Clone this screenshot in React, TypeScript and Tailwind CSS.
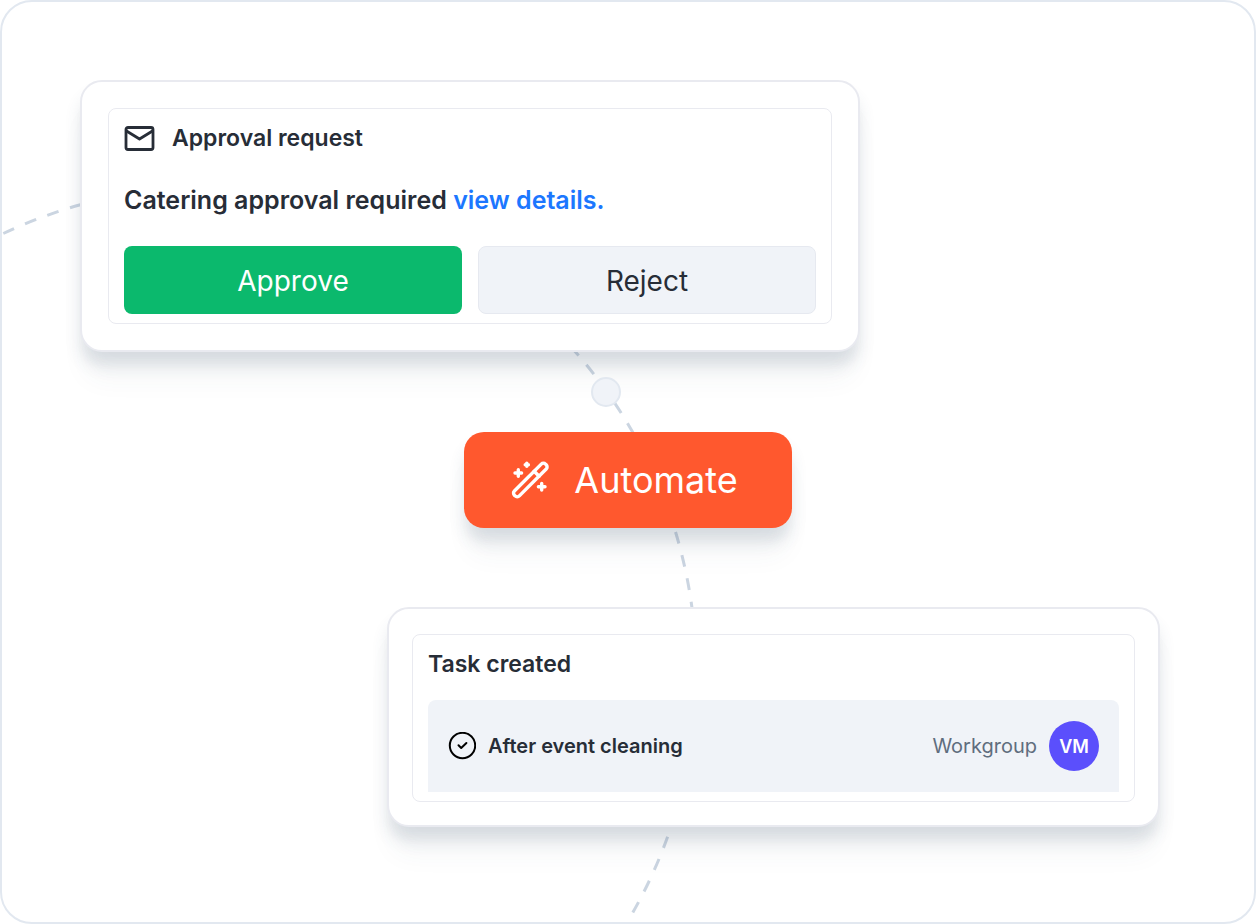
import React from 'react';

const shadowClass =
  'shadow-[0_14px_16px_rgba(60,80,105,0.12),0_14px_12px_-4px_rgba(60,80,105,0.04),0_32px_28px_-6px_rgba(60,80,105,0.05)]';

const cardClass = `relative w-full rounded-[22px] border-2 border-[#e9eaf0] bg-white ${shadowClass}`;

const MailIcon = () => (
  <svg className="h-8 w-8" viewBox="0 0 32 32" fill="none" stroke="currentColor" strokeWidth="2.8" strokeLinecap="round" strokeLinejoin="round" aria-hidden="true">
    <rect x="2" y="5.5" width="27" height="22" rx="2" />
    <path d="M2.5 9 15.5 17 28.5 9" />
  </svg>
);

const WandIcon = () => (
  <svg className="h-10 w-10" viewBox="0 0 40 40" fill="none" stroke="currentColor" strokeWidth="3.4" strokeLinecap="round" strokeLinejoin="round" aria-hidden="true">
    <rect x="-3.5" y="-22" width="7" height="44" rx="3" transform="translate(20.3 20) rotate(45)" />
    <path d="M24.1 11.2 29.1 16.2" />
    <path d="M8.3 9.7v6.6M5 13h6.6M16.8 3.1v3.2M15.2 4.7h3.2M31.7 23.4v6.6M28.4 26.7h6.6" />
  </svg>
);

const CheckCircleIcon = () => (
  <svg className="h-7 w-7" viewBox="0 0 28 28" fill="none" stroke="#000" strokeWidth="2" strokeLinecap="round" strokeLinejoin="round" aria-hidden="true">
    <circle cx="14.5" cy="13.5" r="12.7" />
    <path d="m10.5 13.3 2.7 2.7 5.2-5" />
  </svg>
);

const App = () => {
  return (
    <main className="relative flex min-h-screen flex-col overflow-hidden rounded-[32px] border-2 border-[#e2e8f0] bg-white pt-[78px] pr-[94px] pb-[95px] pl-[78px] font-[Inter,sans-serif] text-[#272d37]">
      {/* Dashed connector behind the cards */}
      <svg className="absolute -top-0.5 -left-0.5" width="1256" height="924" viewBox="0 0 1256 924" fill="none" aria-hidden="true">
        <path
          d="M3.3 233.5A485.5 485.5 0 0 1 632.5 913"
          stroke="#cbd5e1"
          strokeWidth="3"
          strokeDasharray="11.92 11.92"
        />
      </svg>

      {/* Approval request */}
      <section className={`${cardClass} max-w-[780px] p-[26px]`}>
        <div className="rounded-lg border border-[#e9eaf0] px-[15px] pt-[13px] pb-[9px]">
          <div className="flex items-center gap-4">
            <MailIcon />
            <h2 className="text-[23px] leading-8 font-semibold">Approval request</h2>
          </div>
          <p className="mt-7 text-[25px] leading-9 font-semibold">
            Catering approval required{' '}
            <a href="#details" className="text-[#1c77ff]">view details.</a>
          </p>
          <div className="mt-7 grid grid-cols-2 gap-4">
            <button type="button" className="h-[68px] rounded-lg bg-[#0bb96d] pt-0.5 text-[28px] text-white">
              Approve
            </button>
            <button type="button" className="h-[68px] rounded-lg border border-[#e6e9f0] bg-[#f0f3f8] pt-0.5 text-[28px]">
              Reject
            </button>
          </div>
        </div>
      </section>

      <div className="relative ml-4 flex flex-col items-center pt-20">
        <span className="absolute top-[25px] left-[495px] h-[30px] w-[30px] rounded-full border-2 border-[#e2e8f0] bg-[#f0f3f8]" />
        <button
          type="button"
          className={`flex h-24 w-[328px] items-center justify-center gap-6 rounded-[20px] bg-[#ff582e] pr-2 text-[36px] text-white ${shadowClass}`}
        >
          <WandIcon />
          Automate
        </button>
      </div>

      {/* Task created */}
      <section className={`${cardClass} mt-[79px] max-w-[773px] self-end px-[23px] pt-[25px] pb-[23px]`}>
        <div className="rounded-lg border border-[#e9eaf0] px-[15px] pt-[13px] pb-[9px]">
          <h2 className="text-[23px] leading-8 font-semibold">Task created</h2>
          <div className="mt-5 flex h-[92px] items-center rounded-t-lg bg-[#f0f3f8] px-5">
            <CheckCircleIcon />
            <span className="ml-3 text-[20px] font-semibold">After event cleaning</span>
            <span className="ml-auto text-[20px] text-[#5f6d7e]">Workgroup</span>
            <span className="ml-3 flex h-[50px] w-[50px] items-center justify-center rounded-full bg-[#5b4ffc] text-[18px] font-semibold text-white">
              VM
            </span>
          </div>
        </div>
      </section>
    </main>
  );
};

export default App;
